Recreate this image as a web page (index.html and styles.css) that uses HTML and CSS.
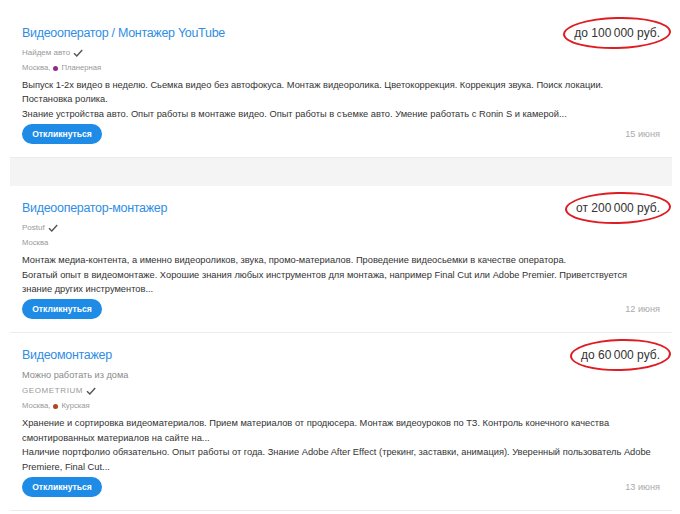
FILE: index.html
```html
<!DOCTYPE html>
<html lang="ru">
<head>
<meta charset="utf-8">
<title>Вакансии</title>
<link rel="stylesheet" href="styles.css">
</head>
<body>
<div class="list">
  <div class="card">
    <div class="head">
      <a class="title" href="#">Видеооператор / Монтажер YouTube</a>
      <span class="salary">до 100&#8239;000 руб.</span>
    </div>
    <div class="company">Найдем авто <svg class="check" viewBox="0 0 10 8" width="10" height="8"><path d="M1 4.2 L3.8 7 L9.2 1"/></svg></div>
    <div class="address">Москва, <span class="metro metro-purple"></span>Планерная</div>
    <div class="desc">
      <p>Выпуск 1-2х видео в неделю. Сьемка видео без автофокуса. Монтаж видеоролика. Цветокоррекция. Коррекция звука. Поиск локации.<br>Постановка ролика.</p>
      <p>Знание устройства авто. Опыт работы в монтаже видео. Опыт работы в съемке авто. Умение работать с Ronin S и камерой...</p>
    </div>
    <div class="foot">
      <button class="btn">Откликнуться</button>
      <span class="date">15 июня</span>
    </div>
  </div>
  <div class="gap"></div>
  <div class="card">
    <div class="head">
      <a class="title" href="#">Видеооператор-монтажер</a>
      <span class="salary">от 200&#8239;000 руб.</span>
    </div>
    <div class="company">Postuf <svg class="check" viewBox="0 0 10 8" width="10" height="8"><path d="M1 4.2 L3.8 7 L9.2 1"/></svg></div>
    <div class="address">Москва</div>
    <div class="desc">
      <p>Монтаж медиа-контента, а именно видеороликов, звука, промо-материалов. Проведение видеосьемки в качестве оператора.</p>
      <p>Богатый опыт в видеомонтаже. Хорошие знания любых инструментов для монтажа, например Final Cut или Adobe Premier. Приветствуется<br>знание других инструментов...</p>
    </div>
    <div class="foot">
      <button class="btn">Откликнуться</button>
      <span class="date">12 июня</span>
    </div>
  </div>
  <div class="card">
    <div class="head">
      <a class="title" href="#">Видеомонтажер</a>
      <span class="salary">до 60&#8239;000 руб.</span>
    </div>
    <div class="remote">Можно работать из дома</div>
    <div class="company company-caps">GEOMETRIUM <svg class="check" viewBox="0 0 10 8" width="10" height="8"><path d="M1 4.2 L3.8 7 L9.2 1"/></svg></div>
    <div class="address">Москва, <span class="metro metro-brown"></span>Курская</div>
    <div class="desc">
      <p>Хранение и сортировка видеоматериалов. Прием материалов от продюсера. Монтаж видеоуроков по ТЗ. Контроль конечного качества смонтированных материалов на сайте на...</p>
      <p>Наличие портфолио обязательно. Опыт работы от года. Знание Adobe After Effect (трекинг, заставки, анимация). Уверенный пользователь Adobe Premiere, Final Cut...</p>
    </div>
    <div class="foot">
      <button class="btn">Откликнуться</button>
      <span class="date">13 июня</span>
    </div>
  </div>
</div>
</body>
</html>
```
FILE: styles.css
```css
* { box-sizing: border-box; }
html, body { margin: 0; padding: 0; background: #fff; }
body {
  font-family: "Liberation Sans", Arial, sans-serif;
  color: #333;
  width: 680px;
  height: 514px;
  overflow: hidden;
}
.list {
  margin: 11px 8px 0 10px;
  width: 662px;
}
.card {
  padding: 14px 12px 13px 12px;
  border-bottom: 1px solid #ececec;
}
.head {
  display: flex;
  justify-content: space-between;
  align-items: center;
  height: 16px;
}
.title {
  font-size: 12.5px;
  letter-spacing: -0.3px;
  line-height: 16px;
  color: #2f8de4;
  text-decoration: none;
}
.salary {
  position: relative;
  font-size: 12px;
  line-height: 16px;
  color: #333;
}
.salary::after {
  content: "";
  position: absolute;
  left: -11px;
  right: -11px;
  top: -8px;
  bottom: -8px;
  border: 2px solid #de1c22;
  border-radius: 50%;
  transform: rotate(-1.5deg);
}
.remote {
  margin-top: 5px;
  font-size: 9.2px;
  line-height: 14px;
  color: #8a8a8a;
}
.company {
  margin-top: 5px;
  font-size: 8px;
  line-height: 14px;
  color: #999;
  display: flex;
  align-items: center;
  gap: 3px;
}
.company-caps { letter-spacing: 0.6px; }
.remote + .company { margin-top: 2px; }
.check {
  fill: none;
  stroke: #555;
  stroke-width: 1.4;
}
.address {
  margin-top: 1px;
  font-size: 7.7px;
  line-height: 14px;
  color: #999;
  display: flex;
  align-items: center;
}
.metro {
  width: 5px;
  height: 5px;
  border-radius: 50%;
  margin: 0 3px 0 3px;
}
.metro-purple { background: #8e2a8c; }
.metro-brown { background: #b4431c; }
.desc {
  margin-top: 3px;
  font-size: 9.3px;
  line-height: 14.4px;
  color: #333;
}
.desc p { margin: 0; }
.foot {
  margin-top: 3px;
  display: flex;
  justify-content: space-between;
  align-items: center;
}
.btn {
  font-family: "Liberation Sans", Arial, sans-serif;
  font-size: 8.6px;
  font-weight: bold;
  color: #fff;
  background: #1e8be6;
  border: none;
  border-radius: 10px;
  height: 20px;
  width: 80px;
  padding: 0;
}
.date {
  font-size: 9.2px;
  color: #aaa;
}
.gap {
  height: 28px;
  background: #f4f4f4;
}
```
